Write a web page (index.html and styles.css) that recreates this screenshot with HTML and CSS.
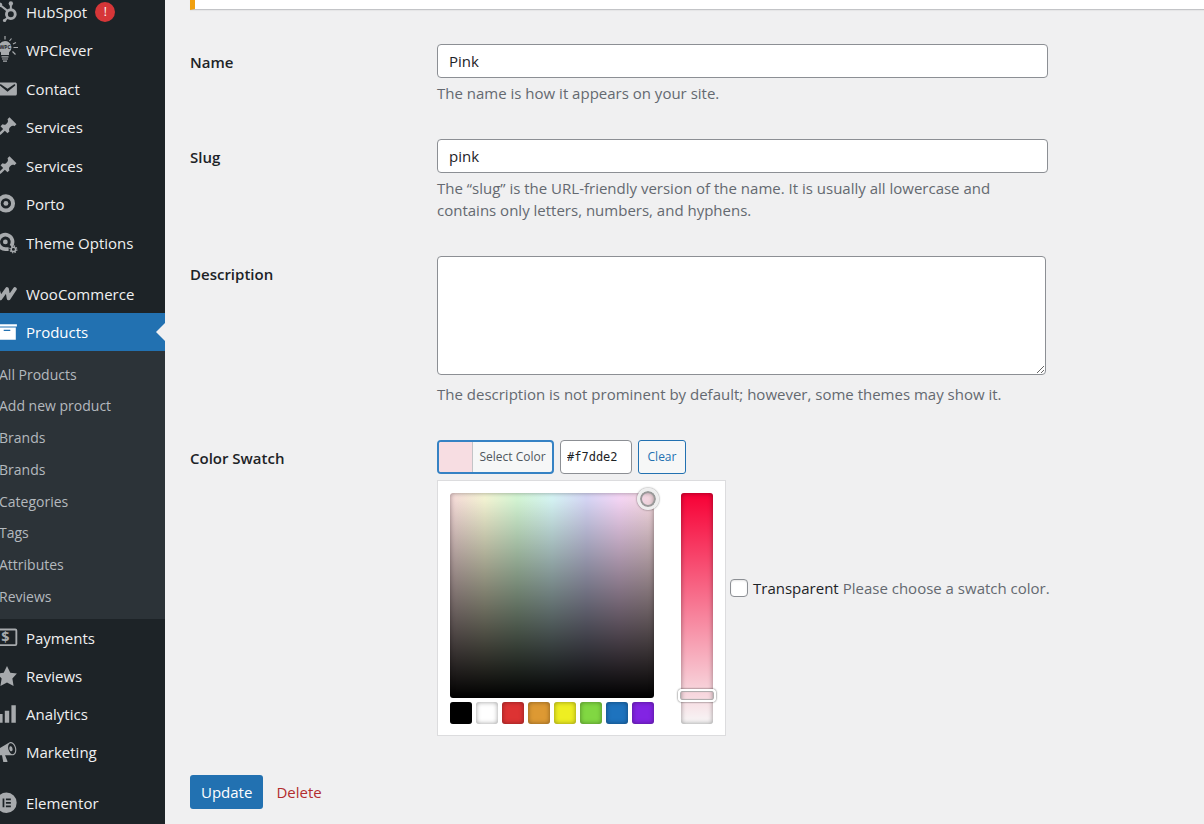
FILE: index.html
```html
<!DOCTYPE html>
<html lang="en">
<head>
  <meta charset="UTF-8" />
  <meta name="viewport" content="width=device-width, initial-scale=1.0"/>
  <title>Edit Color</title>
  <link rel="stylesheet" href="styles.css">
</head>
<body>

<div class="layout">
  <nav class="sidebar">
    <ul class="menu">
      <li><a href="#">
        <svg viewBox="0 0 20 20"><g fill="none" stroke="currentColor"><circle cx="13.5" cy="12" r="4" stroke-width="2.6"/><path d="M13.5 8V3M10.500 9L4 4M10.700 15L8 17.500" stroke-width="1.800"/></g><circle cx="13.500" cy="2.300" r="2"/><circle cx="3.500" cy="3.500" r="2.200"/><circle cx="7.800" cy="17.700" r="1.500"/></svg>
        HubSpot <span class="badge">!</span></a></li>
      <li><a href="#">
        <svg class="bulb" viewBox="0 0 22 28"><path d="M9 5a6.500 6.500 0 0 0-4 11.500V19h8v-2.500A6.500 6.500 0 0 0 9 5z"/><path d="M5.500 20.800h7M6 23h6M7 25.200h4M9 0v3.500M15.500 2.500l-2 2.500M17 8l3-1.500M17.500 11.500H22M16.500 15.500l3 3M2 3l2 2" fill="none" stroke="currentColor" stroke-width="1.200"/><text x="9" y="13">WPC</text></svg>
        WPClever</a></li>
      <li><a href="#">
        <svg viewBox="0 0 20 20"><path d="M3.870 4h13.250C18.370 4 19 4.590 19 5.790v8.420c0 1.190-.63 1.790-1.880 1.790H3.870c-1.250 0-1.880-.6-1.880-1.790V5.790c0-1.200.63-1.790 1.880-1.790zm6.620 8.600l6.740-5.530c.24-.2.430-.66.130-1.070-.29-.41-.82-.42-1.170-.17l-5.700 3.860L4.800 5.830c-.35-.25-.88-.24-1.170.17-.3.410-.11.870.13 1.070z"/></svg>
        Contact</a></li>
      <li><a href="#">
        <svg viewBox="0 0 20 20"><path d="M10.440 3.020l1.820-1.820 6.360 6.350-1.830 1.820c-1.050-.68-2.480-.57-3.410.36l-.75.75c-.92.930-1.040 2.350-.35 3.410l-1.830 1.820-2.410-2.410-2.800 2.790c-.42.420-3.380 2.710-3.800 2.290s1.860-3.390 2.280-3.810l2.790-2.790L4.100 9.360l1.830-1.820c1.050.69 2.480.57 3.400-.36l.75-.75c.93-.92 1.050-2.350.36-3.410z"/></svg>
        Services</a></li>
      <li><a href="#">
        <svg viewBox="0 0 20 20"><path d="M10.440 3.020l1.820-1.820 6.360 6.350-1.830 1.820c-1.050-.68-2.480-.57-3.410.36l-.75.75c-.92.930-1.040 2.350-.35 3.410l-1.830 1.820-2.410-2.410-2.800 2.790c-.42.420-3.380 2.710-3.800 2.290s1.860-3.390 2.280-3.810l2.790-2.790L4.100 9.360l1.830-1.820c1.050.69 2.480.57 3.400-.36l.75-.75c.93-.92 1.050-2.350.36-3.410z"/></svg>
        Services</a></li>
      <li><a href="#">
        <svg viewBox="0 0 20 20"><circle cx="9" cy="9.500" r="6.500" fill="none" stroke="currentColor" stroke-width="3.600"/><circle cx="9" cy="9.500" r="2.200"/></svg>
        Porto</a></li>
      <li><a href="#">
        <svg viewBox="0 0 20 20"><path d="M13.800 12.800A6.500 6.500 0 1 0 8.500 15.500h3" fill="none" stroke="currentColor" stroke-width="3.400"/><circle cx="8.500" cy="9" r="2.200"/><circle cx="15.800" cy="15.800" r="2" fill="none" stroke="currentColor" stroke-width="1.300"/><circle cx="15.800" cy="15.800" r="3.100" fill="none" stroke="currentColor" stroke-width="1.200" stroke-dasharray="1.200 1.235"/></svg>
        Theme Options</a></li>
    </ul>

    <ul class="menu store">
      <li><a href="#">
        <svg viewBox="0 0 20 20"><path d="M1.500 5.500L4 14l6-8.500 1.500 8.500 5.700-8.500" fill="none" stroke="currentColor" stroke-width="3.400" stroke-linecap="round" stroke-linejoin="round"/></svg>
        WooCommerce</a></li>
      <li class="current"><a href="#">
        <svg viewBox="0 0 20 20"><path d="M19 3v2H1V3h18zM2 6h16v11H2V6zm11 3V8H7v1h6z"/></svg>
        Products</a></li>
    </ul>

    <ul class="submenu">
      <li><a href="#">All Products</a></li>
      <li><a href="#">Add new product</a></li>
      <li><a href="#">Brands</a></li>
      <li><a href="#">Brands</a></li>
      <li><a href="#">Categories</a></li>
      <li><a href="#">Tags</a></li>
      <li><a href="#">Attributes</a></li>
      <li><a href="#">Reviews</a></li>
    </ul>

    <ul class="menu">
      <li><a href="#">
        <svg class="pay" viewBox="0 0 20 20"><rect x="0.800" y="2.300" width="17.700" height="14.200" rx="1" fill="none" stroke="currentColor" stroke-width="1.700"/><text x="8.600" y="14">$</text></svg>
        Payments</a></li>
      <li><a href="#">
        <svg viewBox="0 0 20 20"><path d="M10 1l3 6 6 .75-4.120 4.620L16 19l-6-3-6 3 1.130-6.630L1 7.750 7 7z"/></svg>
        Reviews</a></li>
      <li><a href="#">
        <svg viewBox="0 0 20 20"><path d="M18 18V2h-4v16h4zm-6 0V7H8v11h4zm-6 0v-8H2v8h4z"/></svg>
        Analytics</a></li>
      <li><a href="#">
        <svg viewBox="0 0 20 20"><path d="M18.150 5.940c.46 1.620.38 3.220-.02 4.480-.42 1.280-1.260 2.180-2.300 2.480-.16.060-.26.060-.4.060-.06.020-.12.020-.18.020-.06.020-.14.020-.22.020h-6.800l2.220 5.500c.02.140-.06.260-.14.340-.08.100-.24.160-.34.160H6.950c-.1 0-.26-.06-.34-.16-.08-.08-.16-.2-.14-.34l-1-5.500H4.250l-.02-.02c-.5.060-1.080-.18-1.540-.62s-.88-1.080-1.060-1.880c-.24-.8-.2-1.560-.02-2.200.18-.62.58-1.080 1.060-1.300l.02-.02 9-5.400c.1-.06.180-.1.240-.16.060-.04.140-.08.240-.12.160-.08.280-.12.500-.18 1.040-.3 2.240.1 3.220.98s1.840 2.240 2.260 3.860zm-2.580 5.980h-.02c.4-.1.740-.34 1.040-.7.580-.7.860-1.760.860-3.040 0-.64-.1-1.300-.28-1.980-.34-1.360-1.020-2.500-1.780-3.240s-1.680-1.100-2.460-.88c-.82.220-1.400.960-1.700 2-.32 1.040-.28 2.360.06 3.720.38 1.360 1 2.500 1.800 3.240.78.740 1.620 1.100 2.480.88zm-2.540-7.080c.22-.04.420-.02.620.04.380.16.760.48 1.020 1s.42 1.200.42 1.780c0 .3-.04.560-.12.800-.18.480-.44.840-.86.940-.34.100-.8-.06-1.140-.4s-.64-.86-.78-1.500c-.18-.62-.12-1.240.02-1.720s.48-.84.820-.94z"/></svg>
        Marketing</a></li>
    </ul>

    <ul class="menu">
      <li><a href="#">
        <svg viewBox="0 0 20 20"><path fill-rule="evenodd" d="M9.500 0.500a9.300 9.300 0 1 1 0 18.600a9.300 9.300 0 1 1 0-18.600zM6 6v7.800h1.600V6zM9 6v1.500h4.500V6zM9 9.200v1.500h4.500V9.200zM9 12.300v1.500h4.500v-1.500z"/></svg>
        Elementor</a></li>
    </ul>
  </nav>

  <main class="content">
    <div class="notice"></div>

    <form class="edit-form">
      <label for="name">Name</label>
      <div class="field">
        <input type="text" id="name" class="text-input" value="Pink">
        <p>The name is how it appears on your site.</p>
      </div>

      <label for="slug">Slug</label>
      <div class="field">
        <input type="text" id="slug" class="text-input" value="pink">
        <p>The “slug” is the URL-friendly version of the name. It is usually all lowercase and contains only letters, numbers, and hyphens.</p>
      </div>

      <label for="description">Description</label>
      <div class="field">
        <textarea id="description"></textarea>
        <p>The description is not prominent by default; however, some themes may show it.</p>
      </div>

      <label for="hex">Color Swatch</label>
      <div class="field swatch-field">
        <div class="picker">
          <div class="picker-controls">
            <button type="button" class="select-color"><span class="preview"></span><span class="select-text">Select Color</span></button>
            <input type="text" id="hex" class="hex" value="#f7dde2">
            <button type="button" class="clear">Clear</button>
          </div>
          <div class="picker-panel">
            <div class="picker-left">
              <div class="square"><span class="square-handle"></span></div>
              <div class="palette">
                <button type="button" class="black" aria-label="Black"></button>
                <button type="button" class="white" aria-label="White"></button>
                <button type="button" class="red" aria-label="Red"></button>
                <button type="button" class="orange" aria-label="Orange"></button>
                <button type="button" class="yellow" aria-label="Yellow"></button>
                <button type="button" class="green" aria-label="Green"></button>
                <button type="button" class="blue" aria-label="Blue"></button>
                <button type="button" class="purple" aria-label="Purple"></button>
              </div>
            </div>
            <div class="strip"><span class="strip-handle"></span></div>
          </div>
        </div>
        <label class="transparent"><input type="checkbox"> <span>Transparent</span></label>
        <p>Please choose a swatch color.</p>
      </div>

      <div class="actions">
        <button type="submit" class="update">Update</button>
        <a href="#" class="delete">Delete</a>
      </div>
    </form>
  </main>
</div>

</body>
</html>
```
FILE: styles.css
```css
:root {
  --bg: #f0f0f1;
  --menu: #1d2327;
  --submenu: #2c3338;
  --accent: #2271b1;
  --text: #1d2327;
  --muted: #646970;
  --border: #8c8f94;
}

* {
  box-sizing: border-box;
}

body {
  margin: 0;
  font-family: "Open Sans", sans-serif;
  font-size: 15px;
  line-height: 22px;
  background: var(--bg);
  color: var(--text);
  overflow: hidden;
}

button, input, textarea {
  font: inherit;
  color: inherit;
}

p {
  margin: 0;
}

.layout {
  display: flex;
  margin-top: -7px;
  min-height: calc(100vh + 7px);
}

/* Sidebar */
.sidebar {
  flex: none;
  width: 195px;
  margin-left: -30px;
  background: var(--menu);
}

.menu, .submenu {
  list-style: none;
  margin: 0;
  padding: 0;
}

.menu + .menu {
  margin-top: 13px;
}

.menu li {
  height: 38px;
}

.menu:first-child li:nth-child(odd) {
  height: 39px;
}

.menu:first-child li:first-child {
  height: 38px;
}

.menu a {
  display: flex;
  align-items: center;
  gap: 8px;
  height: 100%;
  padding-left: 26px;
  color: #f0f0f1;
  text-decoration: none;
}

.menu svg {
  flex: none;
  width: 22px;
  height: 22px;
  color: #a7aaad;
  fill: currentColor;
}

.menu .bulb {
  height: 28px;
}

.bulb text {
  font-size: 5px;
  font-weight: bold;
  text-anchor: middle;
  fill: var(--menu);
}

.pay text {
  font-size: 13px;
  font-weight: bold;
  text-anchor: middle;
}

.badge {
  width: 20px;
  height: 20px;
  border-radius: 50%;
  background: #d63638;
  color: #fff;
  font-size: 12px;
  line-height: 20px;
  text-align: center;
}

.menu .current {
  position: relative;
  background: var(--accent);
}

.menu .current a, .menu .current svg {
  color: #fff;
}

.current::after {
  content: "";
  position: absolute;
  top: 10px;
  right: 0;
  border: 9px solid transparent;
  border-left-width: 0;
  border-right-color: var(--bg);
}

.submenu {
  padding: 8px 0 6px 29px;
  background: var(--submenu);
  font-size: 14px;
}

.submenu li {
  line-height: 32px;
}

.submenu li:nth-child(4n+1) {
  line-height: 31px;
}

.submenu a {
  color: #b4b9be;
  text-decoration: none;
}

/* Content */
.content {
  flex: 1;
  min-width: 0;
  padding-left: 25px;
}

.notice {
  height: 17px;
  margin-right: -10px;
  background: #fff;
  border: 1px solid #c3c4c7;
  border-left: 5px solid #f0a010;
  box-shadow: 0 1px 1px rgba(0, 0, 0, .04);
}

.edit-form {
  display: grid;
  grid-template-columns: 247px 1fr;
  row-gap: 35px;
  padding: 34px 20px 20px 0;
}

.edit-form > label {
  padding-top: 7px;
  font-weight: 600;
}

.field {
  max-width: 611px;
}

.field p {
  color: var(--muted);
}

.text-input, textarea, .hex {
  display: block;
  width: 100%;
  height: 34px;
  padding: 0 11px;
  background: #fff;
  border: 1px solid var(--border);
  border-radius: 4px;
}

.text-input {
  margin-bottom: 4px;
}

textarea {
  max-width: 609px;
  height: 119px;
  margin-bottom: 8px;
  resize: vertical;
}

.swatch-field {
  display: flex;
  align-items: center;
  gap: 4px;
  font-size: 15px;
  white-space: nowrap;
}

.picker-controls {
  display: flex;
  gap: 6px;
  margin-bottom: 6px;
  font-size: 12px;
}

.select-color, .clear {
  padding: 0;
  background: #f6f7f7;
  border: 1px solid var(--accent);
  border-radius: 3px;
}

.select-color {
  display: flex;
  overflow: hidden;
  width: 117px;
  height: 34px;
  border: 2px solid #3582c4;
  border-radius: 4px;
  color: #50575e;
  line-height: 30px;
}

.preview {
  width: 34px;
  height: 100%;
  background: #f7dde2;
  border-right: 1px solid #c3c4c7;
}

.select-text {
  flex: 1;
  text-align: center;
}

.hex {
  width: 72px;
  padding: 0 6px;
  font-family: "DejaVu Sans Mono", monospace;
}

.clear {
  width: 48px;
  color: var(--accent);
}

.picker-panel {
  display: flex;
  gap: 27px;
  width: 289px;
  padding: 12px 12px 11px;
  background: #fff;
  border: 1px solid #dcdcde;
}

.picker-left {
  flex: 1;
}

.square {
  position: relative;
  height: 205px;
  margin-bottom: 4px;
  border-radius: 3px;
  background:
    linear-gradient(to bottom, transparent, #000),
    linear-gradient(to right, #fadddd, #f9f9d8 17%, #d8fad8 33%, #daf9f9 50%, #dadafa 67%, #fadafa 83%, #f9dde2);
  box-shadow: inset 0 0 5px rgba(0, 0, 0, .4);
}

.square-handle {
  position: absolute;
  top: -5px;
  right: -5px;
  width: 22px;
  height: 22px;
  border: 3px solid #eee;
  border-radius: 50%;
  box-shadow: 0 0 2px rgba(0, 0, 0, .6), inset 0 0 0 2px #999;
}

.palette {
  display: flex;
  gap: 4px;
}

.palette button {
  width: 22px;
  height: 22px;
  padding: 0;
  border: 0;
  border-radius: 3px;
  box-shadow: inset 0 0 5px rgba(0, 0, 0, .4);
}

.black { background: #000; }
.white { background: #fff; }
.red { background: #d33; }
.orange { background: #d93; }
.yellow { background: #ee2; }
.green { background: #81d742; }
.blue { background: #1e73be; }
.purple { background: #8224e3; }

.strip {
  position: relative;
  width: 32px;
  border-radius: 3px;
  background: linear-gradient(to bottom, #f70035, #f7f7f7);
  box-shadow: inset 0 0 5px rgba(0, 0, 0, .4);
}

.strip-handle {
  position: absolute;
  left: -3px;
  right: -3px;
  bottom: 22px;
  height: 13px;
  border: 2px solid #fff;
  border-radius: 4px;
  box-shadow: 0 0 2px rgba(0, 0, 0, .8), inset 0 0 1px 1px #aaa;
}

.transparent {
  display: flex;
  align-items: center;
  gap: 5px;
}

.transparent input {
  appearance: none;
  width: 18px;
  height: 18px;
  margin: 0;
  background: #fff;
  border: 1px solid var(--border);
  border-radius: 4px;
  box-shadow: inset 0 1px 2px rgba(0, 0, 0, .1);
}

.actions {
  display: flex;
  grid-column: 1 / -1;
  align-items: center;
  gap: 13px;
  padding-top: 4px;
}

.update {
  height: 34px;
  padding: 0 11px;
  border: 0;
  border-radius: 3px;
  background: var(--accent);
  color: #fff;
}

.delete {
  color: #b32d2e;
  text-decoration: none;
}
```
